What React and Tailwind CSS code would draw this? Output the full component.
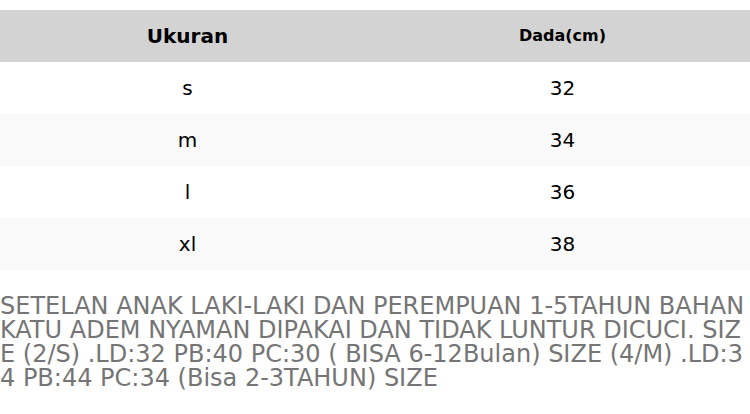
import React from 'react'

const rows = [
  { size: 's', chest: '32' },
  { size: 'm', chest: '34' },
  { size: 'l', chest: '36' },
  { size: 'xl', chest: '38' },
]

const description =
  'SETELAN ANAK LAKI-LAKI DAN PEREMPUAN 1-5TAHUN BAHAN KATU ADEM NYAMAN DIPAKAI DAN TIDAK LUNTUR DICUCI. SIZE (2/S) .LD:32 PB:40 PC:30 ( BISA 6-12Bulan) SIZE (4/M) .LD:34 PB:44 PC:34 (Bisa 2-3TAHUN) SIZE'

function SizeTable() {
  return (
    <table className="mt-[10px] w-full border-collapse text-center text-black">
      <thead>
        <tr className="h-[52px] bg-[#d3d3d3]">
          <th className="w-1/2 text-[20px] font-bold">Ukuran</th>
          <th className="w-1/2 text-[16px] font-bold">Dada(cm)</th>
        </tr>
      </thead>
      <tbody>
        {rows.map((row, i) => (
          <tr key={row.size} className={`h-[52px] ${i % 2 === 1 ? 'bg-[#f9f9f9]' : 'bg-white'}`}>
            <td className="text-[20px]">{row.size}</td>
            <td className="text-[20px]">{row.chest}</td>
          </tr>
        ))}
      </tbody>
    </table>
  )
}

export default function App() {
  return (
    <div
      className="w-[750px] h-[414px] overflow-hidden bg-white"
      style={{ fontFamily: '"DejaVu Sans", sans-serif' }}
    >
      <SizeTable />
      <p className="mt-[24px] break-all text-[24px] leading-[24px] text-[#757575]">{description}</p>
    </div>
  )
}
